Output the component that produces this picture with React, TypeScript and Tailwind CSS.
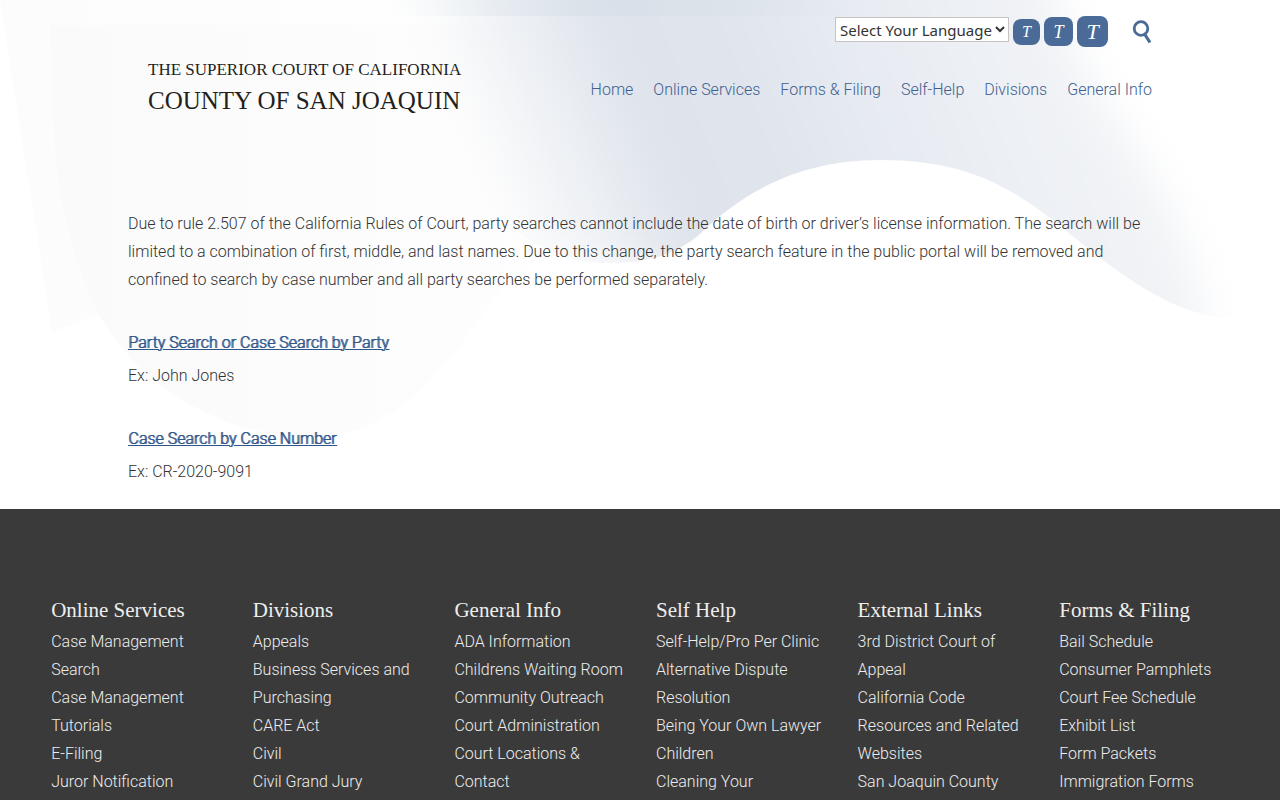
import { useState } from 'react';

const languages = ['English', 'Spanish', 'Tagalog', 'Vietnamese', 'Hmong', 'Khmer'];

const navLinks = ['Home', 'Online Services', 'Forms & Filing', 'Self-Help', 'Divisions', 'General Info'];

const textSizes = [
  { label: 'Small text', className: 'h-[26px] w-[27px] text-base' },
  { label: 'Medium text', className: 'h-[29px] w-[29px] text-lg' },
  { label: 'Large text', className: 'h-[31px] w-[31px] text-[22px]' },
];

const searches = [
  { title: 'Party Search or Case Search by Party', example: 'Ex: John Jones' },
  { title: 'Case Search by Case Number', example: 'Ex: CR-2020-9091' },
];

const footerColumns = [
  {
    title: 'Online Services',
    links: ['Case Management Search', 'Case Management Tutorials', 'E-Filing', 'Juror Notification'],
  },
  {
    title: 'Divisions',
    links: ['Appeals', 'Business Services and Purchasing', 'CARE Act', 'Civil', 'Civil Grand Jury'],
  },
  {
    title: 'General Info',
    links: [
      'ADA Information',
      'Childrens Waiting Room',
      'Community Outreach',
      'Court Administration',
      'Court Locations & Contact',
    ],
  },
  {
    title: 'Self Help',
    links: [
      'Self-Help/Pro Per Clinic',
      'Alternative Dispute Resolution',
      'Being Your Own Lawyer',
      'Children',
      'Cleaning Your',
    ],
  },
  {
    title: 'External Links',
    links: [
      '3rd District Court of Appeal',
      'California Code',
      'Resources and Related Websites',
      'San Joaquin County',
    ],
  },
  {
    title: 'Forms & Filing',
    links: [
      'Bail Schedule',
      'Consumer Pamphlets',
      'Court Fee Schedule',
      'Exhibit List',
      'Form Packets',
      'Immigration Forms',
    ],
  },
];

const Backdrop = () => (
  <svg
    className="pointer-events-none absolute inset-x-0 top-0 -z-10 w-full"
    viewBox="0 0 1280 440"
    aria-hidden="true"
  >
    <defs>
      <linearGradient id="sheet" x1="0" y1="0" x2="1" y2="0">
        <stop offset="0" stopColor="#fafafa" />
        <stop offset="1" stopColor="#ffffff" />
      </linearGradient>
      <linearGradient id="wave" gradientUnits="userSpaceOnUse" x1="455" y1="100" x2="1055" y2="-140">
        <stop offset="0" stopColor="#dfe4ec" stopOpacity="0" />
        <stop offset="0.12" stopColor="#dfe4ec" stopOpacity="0.5" />
        <stop offset="0.26" stopColor="#dfe4ec" />
        <stop offset="0.42" stopColor="#e0e5ed" />
        <stop offset="0.66" stopColor="#e9edf3" />
        <stop offset="0.9" stopColor="#f1f3f6" />
      </linearGradient>
      <linearGradient id="band" x1="0" y1="0" x2="1" y2="0">
        <stop offset="0" stopColor="#d3dee6" stopOpacity="0" />
        <stop offset="0.5" stopColor="#d3dee6" stopOpacity="0.6" />
        <stop offset="1" stopColor="#d3dee6" stopOpacity="0" />
      </linearGradient>
      <filter
        id="soft"
        filterUnits="userSpaceOnUse"
        x="300"
        y="-140"
        width="1080"
        height="640"
        colorInterpolationFilters="sRGB"
      >
        <feGaussianBlur stdDeviation="20" />
      </filter>
      <clipPath id="crest">
        <path d="M300 0H1280V318H1235C1180 318 1130 282 1080 242C1020 192 975 160 880 160C790 160 735 200 700 234C672 258 640 264 600 263C560 261 520 240 480 200L300 200Z" />
      </clipPath>
    </defs>
    <path d="M0 0H560L500 170L52 332Z" fill="url(#sheet)" opacity="0.6" />
    <path
      d="M51 25H700C680 140 590 220 500 290C440 380 390 437 310 437C210 437 110 370 80 270C55 200 51 130 51 25Z"
      fill="url(#sheet)"
    />
    <g clipPath="url(#crest)">
      <path
        d="M340 -80H1040C1055 60 1130 130 1165 200C1190 250 1200 290 1210 370H700L660 270L380 250Z"
        fill="url(#wave)"
        filter="url(#soft)"
      />
    </g>
    <path d="M390 0H860V16H390Z" fill="url(#band)" />
  </svg>
);

const SearchIcon = () => (
  <svg viewBox="0 0 20 24" className="h-6 w-5" fill="none" stroke="#4a6b98" aria-hidden="true">
    <circle cx="9" cy="8.5" r="6.8" strokeWidth="2.8" />
    <path d="M12.5 14L18 22.5" strokeWidth="3.2" />
  </svg>
);

const Header = () => {
  const [language, setLanguage] = useState('');

  return (
    <header className="mx-auto flex w-4/5 items-start justify-between">
      <a href="#" className="ml-5 mt-[58px] font-['Liberation_Serif',serif] font-normal text-[#231f20]">
        <span className="block text-[17px] leading-6">THE SUPERIOR COURT OF CALIFORNIA</span>
        <span className="block text-[25px] leading-[38px]">COUNTY OF SAN JOAQUIN</span>
      </a>

      <div className="flex flex-col items-end pt-4">
        <div className="flex items-center">
          <select
            aria-label="Select Your Language"
            value={language}
            onChange={(e) => setLanguage(e.target.value)}
            className="mb-1 mr-1 h-[25px] w-[174px] border border-[#c4c4c4] bg-white font-['Noto_Sans',sans-serif] text-[15px] font-normal text-[#333]"
          >
            <option value="">Select Your Language</option>
            {languages.map((name) => (
              <option key={name} value={name}>
                {name}
              </option>
            ))}
          </select>
          <div className="flex items-center gap-1">
            {textSizes.map(({ label, className }) => (
              <button
                key={label}
                type="button"
                aria-label={label}
                className={`${className} flex items-center justify-center rounded-lg bg-[#4a6b98] font-['Liberation_Serif',serif] leading-none text-white italic`}
              >
                T
              </button>
            ))}
          </div>
          <button type="button" aria-label="Search" className="ml-6">
            <SearchIcon />
          </button>
        </div>

        <nav className="mt-[29px] flex gap-5 leading-7 text-[#3d6091]">
          {navLinks.map((link) => (
            <a key={link} href="#">
              {link}
            </a>
          ))}
        </nav>
      </div>
    </header>
  );
};

const Footer = () => (
  <footer className="bg-[#3a3a3a] px-[4%] pt-[85px] pb-1 text-[#eee]">
    <div className="grid grid-cols-6 gap-8">
      {footerColumns.map(({ title, links }) => (
        <section key={title}>
          <h2 className="pb-0.5 font-['Liberation_Serif',serif] text-[21px] leading-8 font-normal">{title}</h2>
          <ul className="leading-7">
            {links.map((link) => (
              <li key={link}>
                <a href="#">{link}</a>
              </li>
            ))}
          </ul>
        </section>
      ))}
    </div>
  </footer>
);

const App = () => (
  <div className="relative isolate bg-white font-[Roboto,sans-serif] text-base font-light text-[#333]">
    <Backdrop />
    <Header />
    <main className="mx-auto w-4/5 pt-[90px] pb-[23px] leading-7">
      <p>
        Due to rule 2.507 of the California Rules of Court, party searches cannot include the date of birth or
        driver’s license information. The search will be limited to a combination of first, middle, and last names.
        Due to this change, the party search feature in the public portal will be removed and confined to search by
        case number and all party searches be performed separately.
      </p>
      {searches.map(({ title, example }) => (
        <div key={title} className="mt-[35px]">
          <a href="#" className="text-[#2f5589] underline [text-shadow:1px_0_#2f5589]">
            {title}
          </a>
          <p className="mt-[5px]">{example}</p>
        </div>
      ))}
    </main>
    <Footer />
  </div>
);

export default App;
